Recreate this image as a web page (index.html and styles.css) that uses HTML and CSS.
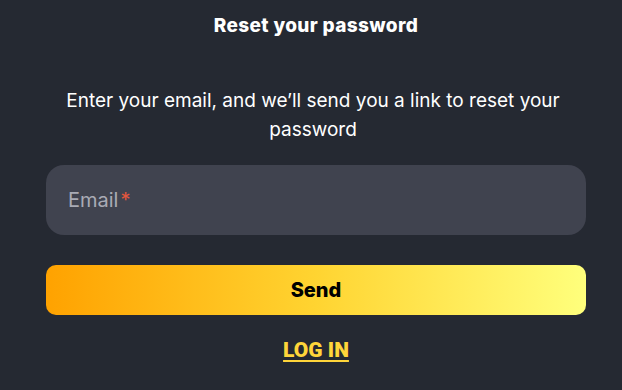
FILE: index.html
```html
<!DOCTYPE html>
<html>
<head>
<meta charset="utf-8">
<link rel="stylesheet" href="styles.css">
</head>
<body>
<main class="reset">
  <h1 class="title">Reset your password</h1>
  <p class="desc">Enter your email, and we’ll send you a link to reset your password</p>
  <form class="form">
    <label class="field">
      <span class="placeholder">Email<span class="req">*</span></span>
    </label>
    <button type="button" class="send">Send</button>
  </form>
  <a class="login" href="#">LOG IN</a>
</main>
</body>
</html>
```
FILE: styles.css
```css
html, body {
  margin: 0;
  padding: 0;
  background: #252932;
}
body {
  width: 622px;
  height: 390px;
  overflow: hidden;
  font-family: Inter, "Noto Sans", sans-serif;
  color: #ffffff;
}
.reset {
  display: flex;
  flex-direction: column;
  align-items: center;
  padding: 14px 36px 0 46px;
}
.title {
  margin: 0;
  font-family: Inter, Roboto, sans-serif;
  font-weight: 800;
  font-size: 19px;
  line-height: 24px;
  letter-spacing: 0.35px;
}
.desc {
  margin: 48px 0 0;
  width: 560px;
  padding-right: 6px;
  text-align: center;
  font-size: 19px;
  line-height: 29px;
  font-weight: 400;
}
.form {
  display: flex;
  flex-direction: column;
  gap: 30px;
  width: 540px;
  margin-top: 21px;
}
.field {
  display: flex;
  align-items: center;
  height: 70px;
  box-sizing: border-box;
  padding: 0 22px;
  background: #40434f;
  border-radius: 18px;
}
.placeholder {
  font-size: 20px;
  color: #a9abb5;
}
.req {
  color: #e4563e;
  margin-left: 2px;
}
.send {
  height: 50px;
  border: 0;
  border-radius: 10px;
  background: linear-gradient(90deg, #ffa200 0%, #ffd431 50%, #ffff7c 100%);
  font-family: Inter, Roboto, sans-serif;
  font-weight: 800;
  font-size: 20px;
  color: #000;
  cursor: pointer;
}
.login {
  margin-top: 23px;
  font-family: Roboto, sans-serif;
  font-weight: 900;
  font-size: 21px;
  color: #ffd53a;
  text-decoration: underline;
  text-decoration-thickness: 2px;
  text-underline-offset: 3px;
  letter-spacing: 0;
}
```
